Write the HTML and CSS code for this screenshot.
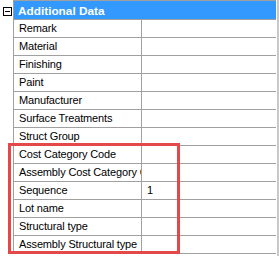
FILE: index.html
```html
<!DOCTYPE html>
<html lang="en">
<head>
  <meta charset="UTF-8" />
  <title>Additional Data</title>
  <link rel="stylesheet" href="styles.css">
</head>
<body>
  <div class="panel">
    <div class="gutter"><span class="toggle"></span></div>

    <div class="grid">
      <div class="category">Additional Data</div>
      <div class="row"><div class="name">Remark</div><div class="value"></div></div>
      <div class="row"><div class="name">Material</div><div class="value"></div></div>
      <div class="row"><div class="name">Finishing</div><div class="value"></div></div>
      <div class="row"><div class="name">Paint</div><div class="value"></div></div>
      <div class="row"><div class="name">Manufacturer</div><div class="value"></div></div>
      <div class="row"><div class="name">Surface Treatments</div><div class="value"></div></div>
      <div class="row"><div class="name">Struct Group</div><div class="value"></div></div>
      <div class="row"><div class="name">Cost Category Code</div><div class="value"></div></div>
      <div class="row"><div class="name">Assembly Cost Category Code</div><div class="value"></div></div>
      <div class="row"><div class="name">Sequence</div><div class="value">1</div></div>
      <div class="row"><div class="name">Lot name</div><div class="value"></div></div>
      <div class="row"><div class="name">Structural type</div><div class="value"></div></div>
      <div class="row"><div class="name">Assembly Structural type</div><div class="value"></div></div>
    </div>

    <div class="scrollbar"></div>

    <div class="highlight"></div>
  </div>
</body>
</html>
```

FILE: styles.css
```css
body {
  margin: 0;
  background: #fff;
  font-family: 'Liberation Sans', Arial, sans-serif;
  font-size: 11px;
  color: #000;
}

.panel {
  position: relative;
  display: flex;
  width: 279px;
  height: 256px;
}

.gutter {
  width: 13px;
  flex: none;
}

.toggle {
  display: block;
  position: relative;
  width: 7px;
  height: 7px;
  margin: 7px 0 0 3px;
  border: 1px solid #000;
  background: #fff;
}

.toggle::after {
  content: '';
  position: absolute;
  left: 1px;
  top: 3px;
  width: 5px;
  height: 1px;
  background: #000;
}

.grid {
  width: 263px;
  flex: none;
  align-self: flex-start;
  box-sizing: border-box;
  border: 1px solid #a0a0a0;
  border-right: none;
}

.category {
  height: 18px;
  line-height: 18px;
  padding-left: 4px;
  background: #3399ff;
  color: #fff;
  font-weight: bold;
  font-size: 11.8px;
  box-sizing: border-box;
  padding-top: 1px;
}

.row {
  display: flex;
  height: 18px;
  line-height: 17px;
  box-sizing: border-box;
  border-top: 1px solid #a0a0a0;
}

.name {
  width: 128px;
  flex: none;
  box-sizing: border-box;
  padding-left: 5px;
  border-right: 1px solid #a0a0a0;
  letter-spacing: -0.15px;
  white-space: nowrap;
  overflow: hidden;
}

.value {
  flex: 1;
  padding-left: 5px;
}

.scrollbar {
  width: 2px;
  margin-left: 1px;
  background: #c8c8c8;
}

.highlight {
  position: absolute;
  left: 8px;
  top: 143px;
  width: 166px;
  height: 105px;
  border: 3px solid #e54848;
}
```
